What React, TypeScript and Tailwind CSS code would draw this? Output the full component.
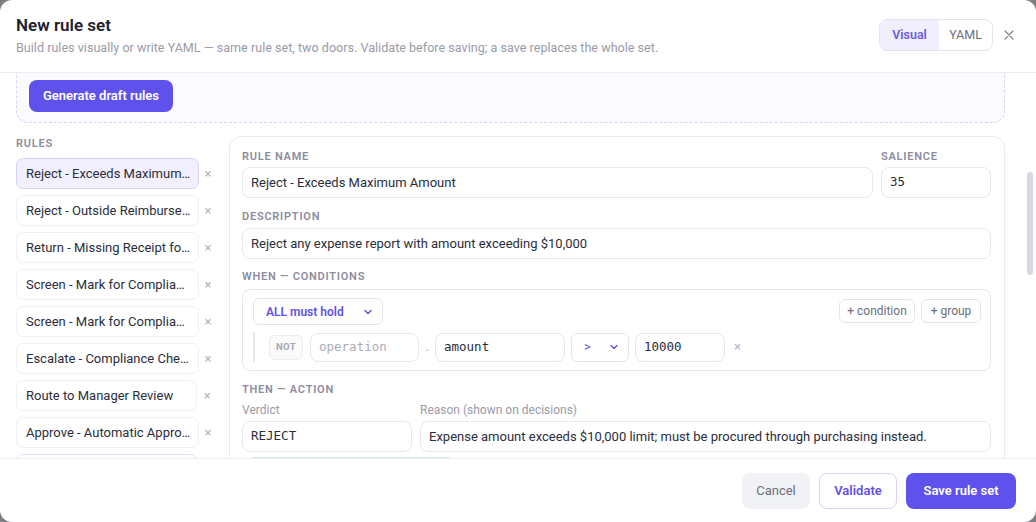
import React from "react";

const rules = [
  "Reject - Exceeds Maximum Amount",
  "Reject - Outside Reimbursement Window",
  "Return - Missing Receipt for Expense",
  "Screen - Mark for Compliance Review",
  "Screen - Mark for Compliance Check",
  "Escalate - Compliance Check Required",
  "Route to Manager Review",
  "Approve - Automatic Approval",
  "Approve - Low Value",
];

function Label({ children }: { children: React.ReactNode }) {
  return (
    <div className="text-[11px] leading-[14px] font-semibold tracking-[0.07em] text-[#8c8c9e] uppercase">
      {children}
    </div>
  );
}

function Chevron({ className }: { className?: string }) {
  return (
    <svg width="12" height="12" viewBox="0 0 12 12" className={className} fill="none">
      <path d="M3 4.5 6 7.5 9 4.5" stroke="currentColor" strokeWidth="1.4" strokeLinecap="round" strokeLinejoin="round" />
    </svg>
  );
}

export default function App() {
  const mono = "font-['DejaVu_Sans_Mono',monospace]";
  return (
    <div className="h-[522px] w-[1036px] bg-[#7d7d82] font-['Roboto',sans-serif] text-[#2b2d3a]">
      <div className="flex h-full flex-col overflow-hidden rounded-xl bg-white">
        {/* header */}
        <div className="flex h-[73px] shrink-0 items-start justify-between border-b border-[#ededf2] pl-4 pr-[21px]">
          <div className="pt-[13px]">
            <div className="text-[17px] leading-[24px] font-semibold text-[#1e2130]">New rule set</div>
            <div className="mt-[1px] text-[12.6px] leading-[20px] text-[#9b9ba8]">
              Build rules visually or write YAML — same rule set, two doors. Validate before saving; a save replaces the whole set.
            </div>
          </div>
          <div className="flex items-center gap-[10px] pt-[19px]">
            <div className="flex h-[32px] overflow-hidden rounded-lg border border-[#e4e4ec] text-[12.5px]">
              <div className="flex w-[59px] items-center justify-center bg-[#f1effe] font-semibold text-[#6a5ae6]">Visual</div>
              <div className="flex w-[53px] items-center justify-center text-[#6b6e7b]">YAML</div>
            </div>
            <svg width="12" height="12" viewBox="0 0 12 12" className="text-[#8a8a96]">
              <path d="M2 2l8 8M10 2l-8 8" stroke="currentColor" strokeWidth="1.4" strokeLinecap="round" />
            </svg>
          </div>
        </div>

        {/* body */}
        <div className="flex min-h-0 flex-1 overflow-hidden">
          <div className="min-w-0 flex-1 overflow-hidden px-4">
            <div className="rounded-b-xl border border-t-0 border-dashed border-[#d9d5f3] bg-[#fbfaff] pb-[10px] pl-3 pt-[7px]">
              <div className="flex h-[32px] w-[144px] items-center justify-center rounded-lg bg-[#5f51ec] text-[13px] font-semibold text-white">
                Generate draft rules
              </div>
            </div>

            <div className="mt-[13px] flex gap-3">
              {/* left list */}
              <div className="w-[201px] shrink-0">
                <div className="pt-[1px]">
                  <Label>Rules</Label>
                </div>
                <div className="mt-[7px] flex flex-col gap-[6px]">
                  {rules.map((r, i) => (
                    <div key={i} className="flex items-center">
                      <div
                        className={
                          "flex h-[31px] w-[183px] items-center rounded-[7px] border pl-[9px] pr-[7px] text-[13px] " +
                          (i === 0
                            ? "border-[#d7d2fa] bg-[#f2f0fe]"
                            : i === 8
                            ? "border-[#e3e0fb] bg-white"
                            : "border-[#efeff4] bg-white")
                        }
                      >
                        <span className="truncate">{r}</span>
                      </div>
                      <div className="flex w-[20px] justify-center text-[13px] text-[#b3b3be]">×</div>
                    </div>
                  ))}
                </div>
              </div>

              {/* right card */}
              <div className="min-w-0 flex-1 rounded-xl border border-[#ebebf0] pb-4 pl-3 pr-[13px] pt-3">
                <div className="flex gap-2">
                  <div className="flex-1">
                    <div className="pt-[1px]">
                      <Label>Rule name</Label>
                    </div>
                    <div className="mt-[3px] flex h-[31px] items-center rounded-lg border border-[#e7e7ed] px-[8px] text-[13px]">
                      Reject - Exceeds Maximum Amount
                    </div>
                  </div>
                  <div className="w-[110px]">
                    <div className="pt-[1px]">
                      <Label>Salience</Label>
                    </div>
                    <div className={"mt-[3px] flex h-[31px] items-center rounded-lg border border-[#e7e7ed] px-[8px] text-[12.5px] " + mono}>
                      35
                    </div>
                  </div>
                </div>

                <div className="mt-[12px]">
                  <Label>Description</Label>
                  <div className="mt-1 flex h-[31px] items-center rounded-lg border border-[#e7e7ed] px-[8px] text-[13px]">
                    Reject any expense report with amount exceeding $10,000
                  </div>
                </div>

                <div className="mt-[11px]">
                  <Label>When — conditions</Label>
                  <div className="mt-[5px] rounded-lg border border-[#e6e6ec] pb-2 pl-[10px] pr-[9px] pt-2">
                    <div className="flex items-start justify-between">
                      <div className="flex h-[27px] w-[130px] items-center justify-between rounded-md border border-[#e4e4ec] pl-3 pr-2 text-[12px] font-semibold text-[#6252e6]">
                        <span>ALL must hold</span>
                        <Chevron />
                      </div>
                      <div className="flex gap-[6px] pt-[1px]">
                        <div className="flex h-[24px] w-[76px] items-center justify-center rounded-md border border-[#e4e4ec] text-[12px] text-[#6b6e7b]">
                          + condition
                        </div>
                        <div className="flex h-[24px] w-[60px] items-center justify-center rounded-md border border-[#e4e4ec] text-[12px] text-[#6b6e7b]">
                          + group
                        </div>
                      </div>
                    </div>
                    <div className="mt-[7px] flex h-[30px] items-center border-l-2 border-[#e6e6ec] pl-[14px]">
                      <div className="flex h-[25px] w-[34px] items-center justify-center rounded-md border border-[#ececf1] bg-[#fafafb] text-[9.5px] font-bold tracking-[0.04em] text-[#a6a6b2]">
                        NOT
                      </div>
                      <div className={"ml-[7px] flex h-[29px] w-[109px] items-center rounded-lg border border-[#e7e7ed] px-[8px] text-[12.5px] text-[#acacb8] " + mono}>
                        operation
                      </div>
                      <div className="flex w-[16px] justify-center text-[12px] text-[#a0a0ac]">.</div>
                      <div className={"flex h-[29px] w-[130px] items-center rounded-lg border border-[#e7e7ed] px-[8px] text-[12.5px] " + mono}>
                        amount
                      </div>
                      <div className="ml-[6px] flex h-[29px] w-[58px] items-center justify-between rounded-md border border-[#e4e4ec] pl-3 pr-2 text-[13px] text-[#6252e6]">
                        <span>&gt;</span>
                        <Chevron />
                      </div>
                      <div className={"ml-[6px] flex h-[29px] w-[90px] items-center rounded-lg border border-[#e7e7ed] px-[8px] text-[12.5px] " + mono}>
                        10000
                      </div>
                      <div className="ml-[9px] text-[13px] text-[#b3b3be]">×</div>
                    </div>
                  </div>
                </div>

                <div className="mt-[12px]">
                  <Label>Then — action</Label>
                  <div className="mt-[5px] flex gap-2">
                    <div className="w-[170px]">
                      <div className="text-[12px] leading-[16px] text-[#9b9ba8]">Verdict</div>
                      <div className={"mt-[3px] flex h-[31px] items-center rounded-lg border border-[#e7e7ed] px-[8px] text-[12.5px] " + mono}>
                        REJECT
                      </div>
                    </div>
                    <div className="flex-1">
                      <div className="text-[12px] leading-[16px] text-[#9b9ba8]">Reason (shown on decisions)</div>
                      <div className="mt-[3px] flex h-[31px] items-center rounded-lg border border-[#e7e7ed] px-[8px] text-[13px]">
                        Expense amount exceeds $10,000 limit; must be procured through purchasing instead.
                      </div>
                    </div>
                  </div>
                  <div className="ml-1 mt-[5px] h-[30px] w-[210px] rounded-lg border border-[#c8ede4] bg-[#f3fcf9]" />
                </div>
              </div>
            </div>
          </div>
          {/* scrollbar */}
          <div className="w-[15px] shrink-0 pl-[6px] pt-[99px]">
            <div className="h-[103px] w-[6px] rounded-full bg-[#d7d7e6]" />
          </div>
        </div>

        {/* footer */}
        <div className="flex h-[64px] shrink-0 items-center justify-end gap-[9px] border-t border-[#ededf2] pr-5">
          <div className="flex h-[36px] w-[68px] items-center justify-center rounded-lg bg-[#f1f2f5] text-[13px] text-[#6b6f7b]">
            Cancel
          </div>
          <div className="flex h-[36px] w-[78px] items-center justify-center rounded-lg border border-[#d8d3fa] bg-white text-[13px] font-semibold text-[#6252e8]">
            Validate
          </div>
          <div className="flex h-[36px] w-[110px] items-center justify-center rounded-lg bg-[#5f51ec] text-[13px] font-semibold text-white">
            Save rule set
          </div>
        </div>
      </div>
    </div>
  );
}
